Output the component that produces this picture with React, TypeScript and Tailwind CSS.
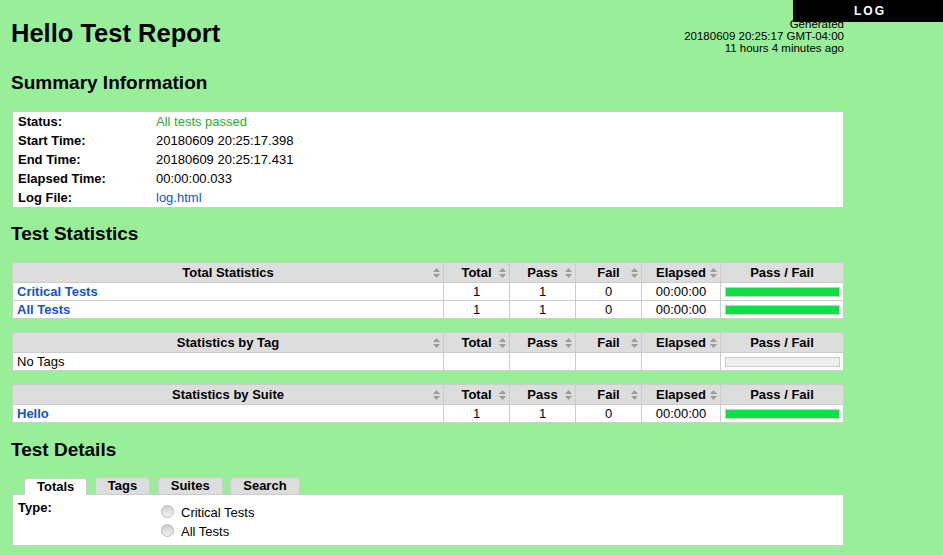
import React from "react"

type StatRow = { name: string; link?: boolean; total?: string; pass?: string; fail?: string; elapsed?: string; bar: "pass" | "empty" }

const totalStats: StatRow[] = [
  { name: "Critical Tests", link: true, total: "1", pass: "1", fail: "0", elapsed: "00:00:00", bar: "pass" },
  { name: "All Tests", link: true, total: "1", pass: "1", fail: "0", elapsed: "00:00:00", bar: "pass" },
]
const tagStats: StatRow[] = [{ name: "No Tags", bar: "empty" }]
const suiteStats: StatRow[] = [
  { name: "Hello", link: true, total: "1", pass: "1", fail: "0", elapsed: "00:00:00", bar: "pass" },
]

const summary = [
  { label: "Status:", value: "All tests passed", cls: "text-[#33aa33]" },
  { label: "Start Time:", value: "20180609 20:25:17.398", cls: "" },
  { label: "End Time:", value: "20180609 20:25:17.431", cls: "" },
  { label: "Elapsed Time:", value: "00:00:00.033", cls: "" },
  { label: "Log File:", value: "log.html", cls: "text-[#1155cc]" },
]

function SortIcon() {
  return (
    <svg width="7" height="10" viewBox="0 0 7 10" className="absolute right-[3px] top-1/2 -translate-y-1/2">
      <polygon points="3.5,0 7,4 0,4" fill="#9a9a9a" />
      <polygon points="0,6 7,6 3.5,10" fill="#9a9a9a" />
    </svg>
  )
}

function HeadCell({ children, sort = true }: { children: React.ReactNode; sort?: boolean }) {
  return (
    <div className="relative h-[20px] border-t border-l border-[#cccccc] bg-[#dddddd] text-center font-bold leading-[19px]">
      {children}
      {sort && <SortIcon />}
    </div>
  )
}

function Cell({ children, className = "" }: { children?: React.ReactNode; className?: string }) {
  return <div className={`h-[18px] border-t border-l border-[#cccccc] bg-white leading-[17px] ${className}`}>{children}</div>
}

function StatTable({ title, rows, className = "" }: { title: string; rows: StatRow[]; className?: string }) {
  return (
    <div className={`ml-px w-[832px] grid grid-cols-[431px_66px_66px_66px_79px_123px] border-r border-b border-[#cccccc] ${className}`}>
      <HeadCell>{title}</HeadCell>
      <HeadCell>Total</HeadCell>
      <HeadCell>Pass</HeadCell>
      <HeadCell>Fail</HeadCell>
      <HeadCell>Elapsed</HeadCell>
      <HeadCell sort={false}>Pass / Fail</HeadCell>
      {rows.map((r) => (
        <React.Fragment key={r.name}>
          <Cell className={`pl-[4px] ${r.link ? "font-bold text-[#1155cc]" : ""}`}>{r.name}</Cell>
          <Cell className="text-center">{r.total}</Cell>
          <Cell className="text-center">{r.pass}</Cell>
          <Cell className="text-center">{r.fail}</Cell>
          <Cell className="text-center">{r.elapsed}</Cell>
          <Cell className="flex items-center">
            <div
              className={`ml-[4px] w-[115px] h-[10px] border border-[#cccccc] ${r.bar === "pass" ? "bg-[#11dd44]" : "bg-[#eeeeee]"}`}
            />
          </Cell>
        </React.Fragment>
      ))}
    </div>
  )
}

function Radio({ label }: { label: string }) {
  return (
    <div className="flex items-start h-[19px] leading-[19px]">
      <span className="mt-[2px] w-[13px] h-[13px] rounded-full border border-[#b8b8b8] bg-gradient-to-b from-[#cfcfcf] to-[#f2f2f2]" />
      <span className="ml-[7px]">{label}</span>
    </div>
  )
}

const tabCls = "h-[17px] px-3 border border-b-0 border-[#cccccc] rounded-t-[3px] leading-[16px]"

export default function App() {
  return (
    <div className="relative min-h-screen bg-[#99ee99] text-black text-[13px] font-['Liberation_Sans',Arial,sans-serif]">
      {/* report / log switch */}
      <div className="absolute right-0 top-0 w-[150px] h-[22px] bg-black text-white text-center text-[12px] font-bold leading-[22px] tracking-[2px] pl-[4px]">
        LOG
      </div>

      <div className="w-[844px] pl-[11px]">
        {/* header */}
        <div className="flex items-start justify-between pt-[18px]">
          <h1 className="text-[25.5px] leading-[30px] font-bold">Hello Test Report</h1>
          <div className="text-right text-[11.5px] leading-[12px]">
            <div>Generated</div>
            <div>20180609 20:25:17 GMT-04:00</div>
            <div>11 hours 4 minutes ago</div>
          </div>
        </div>

        <h2 className="mt-[17px] text-[19px] leading-[24px] font-bold">Summary Information</h2>
        <div className="mt-[16px] ml-px w-[832px] border border-[#cccccc] bg-white">
          {summary.map((s) => (
            <div key={s.label} className="flex h-[19px] leading-[19px]">
              <div className="w-[138px] pl-[5px] font-bold">{s.label}</div>
              <div className={`pl-[5px] ${s.cls}`}>{s.value}</div>
            </div>
          ))}
        </div>

        <h2 className="mt-[14px] text-[19px] leading-[24px] font-bold">Test Statistics</h2>
        <StatTable title="Total Statistics" rows={totalStats} className="mt-[16px]" />
        <StatTable title="Statistics by Tag" rows={tagStats} className="mt-[13px]" />
        <StatTable title="Statistics by Suite" rows={suiteStats} className="mt-[13px]" />

        <h2 className="mt-[15px] text-[19px] leading-[24px] font-bold">Test Details</h2>
        <div className="mt-[15px] ml-px w-[832px]">
          <div className="flex items-end pl-[12px] gap-[7.5px] font-bold">
            <div className={`relative z-10 -mb-px bg-white ${tabCls}`}>Totals</div>
            <div className={`bg-[#dddddd] ${tabCls}`}>Tags</div>
            <div className={`bg-[#dddddd] ${tabCls}`}>Suites</div>
            <div className={`bg-[#dddddd] ${tabCls}`}>Search</div>
          </div>
          <div className="flex border border-[#cccccc] bg-white">
            <div className="w-[148px] pl-[5px] pt-[3px] font-bold leading-[19px]">Type:</div>
            <div className="pt-[8px] pb-[4px]">
              <Radio label="Critical Tests" />
              <Radio label="All Tests" />
            </div>
          </div>
        </div>
      </div>
    </div>
  )
}
